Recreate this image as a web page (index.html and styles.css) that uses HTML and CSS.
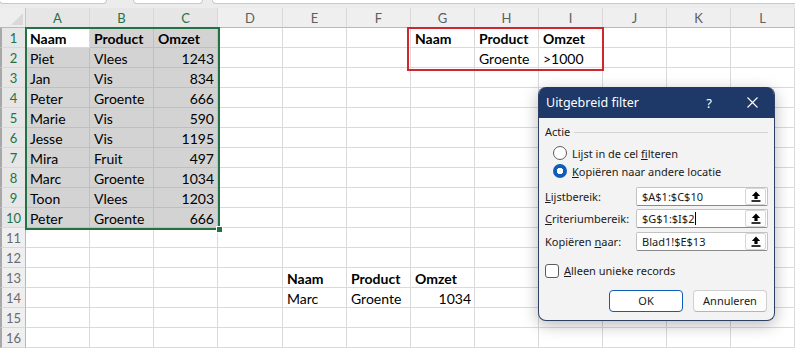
FILE: index.html
```html
<!DOCTYPE html>
<html lang="nl">
<head>
<meta charset="utf-8">
<title>Uitgebreid filter</title>
<link rel="stylesheet" href="styles.css">
</head>
<body>
<div class="app">
  <div class="topstrip">
    <div class="tbox tb1"></div>
    <div class="tbox tb2"></div>
    <div class="tbox tb3"></div>
  </div>
  <div class="sheet">
    <div class="corner"></div><div class="ch sel">A</div><div class="ch sel">B</div><div class="ch sel">C</div><div class="ch">D</div><div class="ch">E</div><div class="ch">F</div><div class="ch">G</div><div class="ch">H</div><div class="ch">I</div><div class="ch">J</div><div class="ch">K</div><div class="ch">L</div>

    <div class="rh sel">1</div><div class="c b">Naam</div><div class="c s b">Product</div><div class="c s b">Omzet</div><div class="c"></div><div class="c"></div><div class="c"></div><div class="c b">Naam</div><div class="c b">Product</div><div class="c b">Omzet</div><div class="c"></div><div class="c"></div><div class="c"></div>

    <div class="rh sel">2</div><div class="c s">Piet</div><div class="c s">Vlees</div><div class="c s n">1243</div><div class="c"></div><div class="c"></div><div class="c"></div><div class="c"></div><div class="c">Groente</div><div class="c">&gt;1000</div><div class="c"></div><div class="c"></div><div class="c"></div>

    <div class="rh sel">3</div><div class="c s">Jan</div><div class="c s">Vis</div><div class="c s n">834</div><div class="c"></div><div class="c"></div><div class="c"></div><div class="c"></div><div class="c"></div><div class="c"></div><div class="c"></div><div class="c"></div><div class="c"></div>

    <div class="rh sel">4</div><div class="c s">Peter</div><div class="c s">Groente</div><div class="c s n">666</div><div class="c"></div><div class="c"></div><div class="c"></div><div class="c"></div><div class="c"></div><div class="c"></div><div class="c"></div><div class="c"></div><div class="c"></div>

    <div class="rh sel">5</div><div class="c s">Marie</div><div class="c s">Vis</div><div class="c s n">590</div><div class="c"></div><div class="c"></div><div class="c"></div><div class="c"></div><div class="c"></div><div class="c"></div><div class="c"></div><div class="c"></div><div class="c"></div>

    <div class="rh sel">6</div><div class="c s">Jesse</div><div class="c s">Vis</div><div class="c s n">1195</div><div class="c"></div><div class="c"></div><div class="c"></div><div class="c"></div><div class="c"></div><div class="c"></div><div class="c"></div><div class="c"></div><div class="c"></div>

    <div class="rh sel">7</div><div class="c s">Mira</div><div class="c s">Fruit</div><div class="c s n">497</div><div class="c"></div><div class="c"></div><div class="c"></div><div class="c"></div><div class="c"></div><div class="c"></div><div class="c"></div><div class="c"></div><div class="c"></div>

    <div class="rh sel">8</div><div class="c s">Marc</div><div class="c s">Groente</div><div class="c s n">1034</div><div class="c"></div><div class="c"></div><div class="c"></div><div class="c"></div><div class="c"></div><div class="c"></div><div class="c"></div><div class="c"></div><div class="c"></div>

    <div class="rh sel">9</div><div class="c s">Toon</div><div class="c s">Vlees</div><div class="c s n">1203</div><div class="c"></div><div class="c"></div><div class="c"></div><div class="c"></div><div class="c"></div><div class="c"></div><div class="c"></div><div class="c"></div><div class="c"></div>

    <div class="rh sel">10</div><div class="c s">Peter</div><div class="c s">Groente</div><div class="c s n">666</div><div class="c"></div><div class="c"></div><div class="c"></div><div class="c"></div><div class="c"></div><div class="c"></div><div class="c"></div><div class="c"></div><div class="c"></div>

    <div class="rh">11</div><div class="c"></div><div class="c"></div><div class="c"></div><div class="c"></div><div class="c"></div><div class="c"></div><div class="c"></div><div class="c"></div><div class="c"></div><div class="c"></div><div class="c"></div><div class="c"></div>

    <div class="rh">12</div><div class="c"></div><div class="c"></div><div class="c"></div><div class="c"></div><div class="c"></div><div class="c"></div><div class="c"></div><div class="c"></div><div class="c"></div><div class="c"></div><div class="c"></div><div class="c"></div>

    <div class="rh">13</div><div class="c"></div><div class="c"></div><div class="c"></div><div class="c"></div><div class="c b">Naam</div><div class="c b">Product</div><div class="c b">Omzet</div><div class="c"></div><div class="c"></div><div class="c"></div><div class="c"></div><div class="c"></div>

    <div class="rh">14</div><div class="c"></div><div class="c"></div><div class="c"></div><div class="c"></div><div class="c">Marc</div><div class="c">Groente</div><div class="c n">1034</div><div class="c"></div><div class="c"></div><div class="c"></div><div class="c"></div><div class="c"></div>

    <div class="rh">15</div><div class="c"></div><div class="c"></div><div class="c"></div><div class="c"></div><div class="c"></div><div class="c"></div><div class="c"></div><div class="c"></div><div class="c"></div><div class="c"></div><div class="c"></div><div class="c"></div>

    <div class="rh">16</div><div class="c"></div><div class="c"></div><div class="c"></div><div class="c"></div><div class="c"></div><div class="c"></div><div class="c"></div><div class="c"></div><div class="c"></div><div class="c"></div><div class="c"></div><div class="c"></div>
  </div>

  <div class="selbox"><span class="handle"></span></div>
  <div class="critbox"></div>

  <div class="dlg">
    <div class="dlg-title">
      <span class="dlg-name">Uitgebreid filter</span>
      <span class="dlg-help">?</span>
      <span class="dlg-close"><svg width="11" height="11" viewBox="0 0 11 11"><path d="M0.5 0.5 L10.5 10.5 M10.5 0.5 L0.5 10.5" stroke="#fff" stroke-width="1.1" fill="none"/></svg></span>
    </div>
    <div class="dlg-body">
      <div class="grp"><span>Actie</span><span class="grp-line"></span></div>
      <div class="opt first"><span class="radio"></span><span>Lijst in de cel <u>f</u>ilteren</span></div>
      <div class="opt"><span class="radio on"></span><span><u>K</u>opiëren naar andere locatie</span></div>
      <div class="field first"><span class="lbl"><u>L</u>ijstbereik:</span><div class="inp"><span class="val">$A$1:$C$10</span><span class="pick"><svg width="10" height="11" viewBox="0 0 10 11"><path d="M5 0.5 L0.8 5 H3.4 V8 H6.6 V5 H9.2 Z" fill="#000"/><rect x="0.5" y="9.2" width="9" height="1.6" fill="#000"/></svg></span></div></div>
      <div class="field"><span class="lbl"><u>C</u>riteriumbereik:</span><div class="inp"><span class="val">$G$1:$I$2<span class="caret"></span></span><span class="pick"><svg width="10" height="11" viewBox="0 0 10 11"><path d="M5 0.5 L0.8 5 H3.4 V8 H6.6 V5 H9.2 Z" fill="#000"/><rect x="0.5" y="9.2" width="9" height="1.6" fill="#000"/></svg></span></div></div>
      <div class="field"><span class="lbl">Kopiëren <u>n</u>aar:</span><div class="inp"><span class="val">Blad1!$E$13</span><span class="pick"><svg width="10" height="11" viewBox="0 0 10 11"><path d="M5 0.5 L0.8 5 H3.4 V8 H6.6 V5 H9.2 Z" fill="#000"/><rect x="0.5" y="9.2" width="9" height="1.6" fill="#000"/></svg></span></div></div>
      <div class="chkrow"><span class="chk"></span><span><u>A</u>lleen unieke records</span></div>
      <div class="btns"><span class="btn primary">OK</span><span class="btn">Annuleren</span></div>
    </div>
  </div>
</div>
</body>
</html>
```

FILE: styles.css
```css
* { box-sizing: border-box; }
html, body { margin: 0; padding: 0; background: #fff; }
body {
  width: 795px;
  height: 349px;
  overflow: hidden;
  font-family: Lato, "Liberation Sans", sans-serif;
  color: #000;
}
.app { position: relative; width: 795px; height: 349px; overflow: hidden; }

/* top strip (formula bar remnants) */
.topstrip {
  height: 8px;
  background: #ececec;
  display: flex;
  align-items: flex-start;
}
.tbox {
  height: 4px;
  background: #fff;
  border: 1px solid #c9c9c9;
  border-top: none;
  border-radius: 0 0 4px 4px;
}
.tb1 { width: 108px; margin-left: -1px; }
.tb2 { width: 70px; margin-left: 26px; }
.tb3 { flex: 1; margin-left: 9px; margin-right: -6px; }

/* sheet grid */
.sheet {
  display: grid;
  grid-template-columns: 26px 64px 64px 64px 65px repeat(8, 64px);
  grid-auto-rows: 20px;
  font-size: 14px;
}
.corner {
  background: #eeeeee;
  border-right: 1px solid #c6c6c6;
  border-bottom: 1px solid #b8b8b8;
  position: relative;
}
.corner::after {
  content: "";
  position: absolute;
  right: 2px; bottom: 2px;
  border-left: 12px solid transparent;
  border-bottom: 12px solid #d9d9d9;
}
.ch {
  background: #efefef;
  border-right: 1px solid #d8d8d8;
  border-bottom: 1px solid #b8b8b8;
  text-align: center;
  font-size: 13px;
  line-height: 20px;
  color: #5e5e5e;
}
.ch.sel { background: #e6e6e6; color: #217346; }
.rh {
  background: #efefef;
  border-right: 1px solid #b8b8b8;
  border-bottom: 1px solid #d8d8d8;
  border-left: 2px solid #a8a8a8;
  text-align: center;
  font-size: 13px;
  line-height: 21px;
  color: #6a6a6a;
}
.rh.sel { background: #e6e6e6; color: #217346; }
.c {
  border-right: 1px solid #dadada;
  border-bottom: 1px solid #dadada;
  padding: 1px 3px 0 4px;
  line-height: 19px;
  white-space: nowrap;
  overflow: visible;
}
.c.s { background: #d3d3d3; border-color: #bfbfbf; }
.c.b { font-weight: 700; }
.c.n { text-align: right; }

/* selection outline A1:C10 */
.selbox {
  position: absolute;
  left: 25px; top: 27px;
  width: 195px; height: 203px;
  border: 2px solid #217346;
}
.handle {
  position: absolute;
  right: -5px; bottom: -5px;
  width: 7px; height: 7px;
  background: #217346;
  border: 1px solid #fff;
}
/* criteria outline G1:I2 */
.critbox {
  position: absolute;
  left: 407px; top: 27px;
  width: 197px; height: 44px;
  border: 2px solid #d3262c;
}

/* dialog */
.dlg {
  position: absolute;
  left: 538px; top: 87px;
  width: 237px; height: 234px;
  background: #f3f3f3;
  border: 1px solid #2d3f62;
  border-top: none;
  border-radius: 8px;
  overflow: hidden;
  box-shadow: 0 4px 16px rgba(0,0,0,0.28);
  font-family: "Noto Sans", "Open Sans", sans-serif;
  font-size: 11px;
  color: #1a1a1a;
}
.dlg-title {
  height: 31px;
  background: #1e3868;
  color: #fff;
  display: flex;
  align-items: center;
  padding-left: 8px;
  margin: 0 -1px;
}
.dlg-name { flex: 1; font-size: 12.5px; padding-bottom: 1px; }
.dlg-help { width: 14px; text-align: center; font-size: 13px; margin-right: 31px; }
.dlg-close { width: 11px; height: 11px; display: flex; margin-right: 17px; }
.dlg-body { padding: 6px 6px 0 6px; }

.grp { display: flex; align-items: center; height: 15px; }
.grp-line { flex: 1; border-top: 1px solid #d5d5d5; margin-left: 4px; margin-top: 1px; }

.opt { display: flex; align-items: center; height: 18px; padding-left: 8px; }
.opt.first { margin-top: 5px; }
.radio {
  width: 14px; height: 14px;
  border-radius: 50%;
  border: 1px solid #5c5c5c;
  background: #fff;
  margin-right: 5px;
  flex: none;
}
.radio.on {
  border: none;
  background: radial-gradient(circle, #fff 0 3px, #0f5cba 3.5px);
}

.field { display: flex; align-items: center; height: 22.5px; }
.field.first { margin-top: 5px; }
.lbl { width: 91px; flex: none; }
.inp {
  width: 132px; height: 19px;
  background: #fff;
  border: 1px solid #c3c3c3;
  border-bottom-color: #8a8a8a;
  border-radius: 2px;
  display: flex;
  align-items: center;
  padding-left: 5px;
}
.val { flex: 1; display: flex; align-items: center; }
.caret { display: inline-block; width: 1px; height: 13px; background: #000; margin-left: 1px; }
.pick {
  width: 21px; height: 17px;
  border: 1px solid #d6d6d6;
  border-radius: 2px;
  background: #fdfdfd;
  display: flex; align-items: center; justify-content: center;
  margin-right: 1px;
}

.chkrow { display: flex; align-items: center; height: 16px; margin-top: 10px; }
.chk {
  width: 14px; height: 14px;
  border: 1px solid #5c5c5c;
  border-radius: 3px;
  background: #fff;
  margin-right: 5px;
}

.btns { display: flex; justify-content: flex-end; gap: 10px; margin-top: 11px; padding-right: 1px; }
.btn {
  width: 74px; height: 22px;
  background: #fdfdfd;
  border: 1px solid #d0d0d0;
  border-bottom-color: #b5b5b5;
  border-radius: 4px;
  display: flex; align-items: center; justify-content: center;
  padding-bottom: 1px;
}
.btn.primary { border: 1px solid #0f5cba; background: #fff; }
```
